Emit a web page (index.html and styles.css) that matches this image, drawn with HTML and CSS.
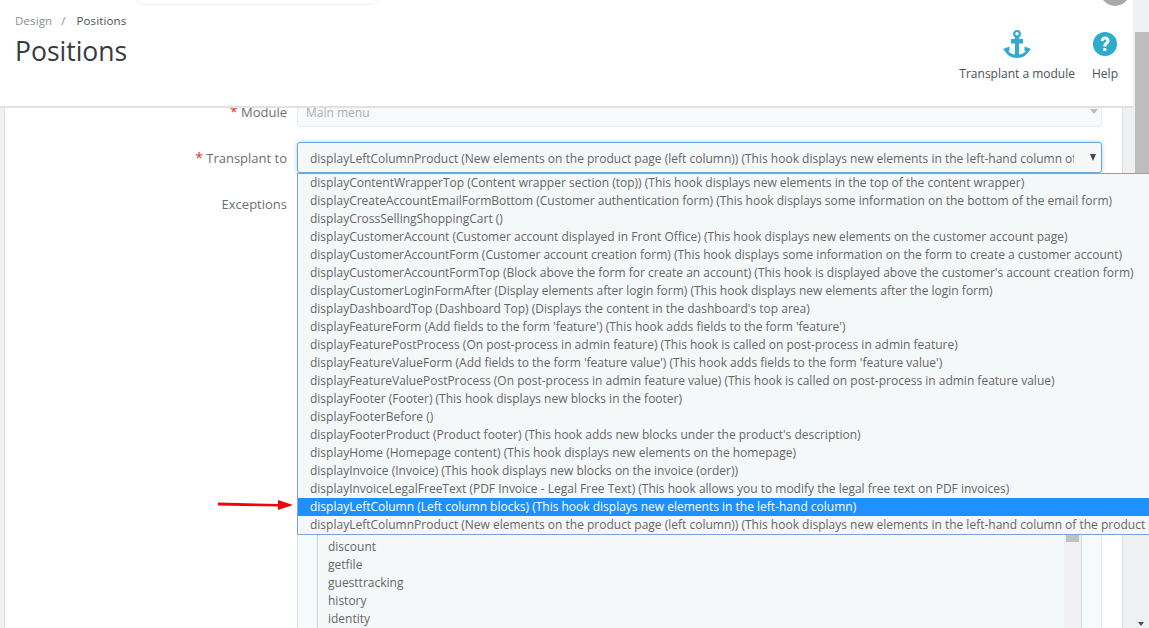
FILE: index.html
```html
<!DOCTYPE html>
<html lang="en">
<head>
<meta charset="utf-8">
<title>Positions</title>
<link rel="stylesheet" href="styles.css">
</head>
<body>
<div class="viewport">
  <div class="page">
    <header class="head">
      <div class="search-edge"></div>
      <div class="avatar"></div>
      <div class="head-left">
        <nav class="crumbs"><span class="crumb">Design</span><span class="sep">/</span><span class="crumb-cur">Positions</span></nav>
        <h1 class="title">Positions</h1>
      </div>
      <div class="toolbar">
        <a class="tool">
          <svg class="tool-icon" viewBox="0 0 30 30" width="30" height="30"><circle cx="15" cy="4.800" r="2.800" fill="none" stroke="#2eacce" stroke-width="2.200"/><rect x="13" y="8" width="4" height="19" fill="#2eacce"/><rect x="9" y="10" width="12" height="4.500" fill="#2eacce"/><path d="M1 20 L7.500 17.500 L7.500 22 L6 21.800 C8 24.500 11 25.800 15 26 C19 25.800 22 24.500 24 21.800 L22.500 22 L22.500 17.500 L29 20 L27.500 21.500 C25 26 21 29 15 29 C9 29 5 26 2.500 21.500 Z" fill="#2eacce"/></svg>
          <span class="tool-label">Transplant a module</span>
        </a>
        <a class="tool">
          <svg class="tool-icon" viewBox="0 0 30 30" width="30" height="30"><circle cx="15" cy="15" r="12" fill="#2eacce"/><path d="M10.800 12 c0 -6 8.700 -6 8.700 -.3 c0 3.500 -3.200 3 -3.200 5.800 h-3 c0 -4.300 3.100 -4 3.100 -5.800 c0 -1.800 -2.900 -1.800 -2.900 .5 z" fill="#fff"/><rect x="13.300" y="19" width="3" height="3" fill="#fff"/></svg>
          <span class="tool-label">Help</span>
        </a>
      </div>
    </header>
    <main class="content">
      <section class="panel">
        <div class="row row-module">
          <label class="label"><span class="req">*</span> Module</label>
          <div class="control select disabled">Main menu<span class="caret caret-muted"></span></div>
        </div>
        <div class="row row-transplant">
          <label class="label"><span class="req">*</span> Transplant to</label>
          <div class="control select focused"><span class="select-text">displayLeftColumnProduct (New elements on the product page (left column)) (This hook displays new elements in the left-hand column of the product page)</span><span class="caret"></span></div>
        </div>
        <div class="row row-exceptions">
          <label class="label">Exceptions</label>
          <div class="control exceptions">
            <div class="exc-list">
              <div class="exc-items">
                <div class="exc-item">discount</div>
                <div class="exc-item">getfile</div>
                <div class="exc-item">guesttracking</div>
                <div class="exc-item">history</div>
                <div class="exc-item">identity</div>
              </div>
              <div class="exc-scroll"><div class="exc-thumb"></div></div>
            </div>
          </div>
        </div>
      </section>
    </main>
  </div>
  <div class="scrollbar">
    <div class="sb-thumb"></div>
    <div class="sb-down"></div>
  </div>
  <ul class="dropdown">
    <li>displayContentWrapperTop (Content wrapper section (top)) (This hook displays new elements in the top of the content wrapper)</li>
    <li>displayCreateAccountEmailFormBottom (Customer authentication form) (This hook displays some information on the bottom of the email form)</li>
    <li>displayCrossSellingShoppingCart ()</li>
    <li>displayCustomerAccount (Customer account displayed in Front Office) (This hook displays new elements on the customer account page)</li>
    <li>displayCustomerAccountForm (Customer account creation form) (This hook displays some information on the form to create a customer account)</li>
    <li>displayCustomerAccountFormTop (Block above the form for create an account) (This hook is displayed above the customer's account creation form)</li>
    <li>displayCustomerLoginFormAfter (Display elements after login form) (This hook displays new elements after the login form)</li>
    <li>displayDashboardTop (Dashboard Top) (Displays the content in the dashboard's top area)</li>
    <li>displayFeatureForm (Add fields to the form 'feature') (This hook adds fields to the form 'feature')</li>
    <li>displayFeaturePostProcess (On post-process in admin feature) (This hook is called on post-process in admin feature)</li>
    <li>displayFeatureValueForm (Add fields to the form 'feature value') (This hook adds fields to the form 'feature value')</li>
    <li>displayFeatureValuePostProcess (On post-process in admin feature value) (This hook is called on post-process in admin feature value)</li>
    <li>displayFooter (Footer) (This hook displays new blocks in the footer)</li>
    <li>displayFooterBefore ()</li>
    <li>displayFooterProduct (Product footer) (This hook adds new blocks under the product's description)</li>
    <li>displayHome (Homepage content) (This hook displays new elements on the homepage)</li>
    <li>displayInvoice (Invoice) (This hook displays new blocks on the invoice (order))</li>
    <li>displayInvoiceLegalFreeText (PDF Invoice - Legal Free Text) (This hook allows you to modify the legal free text on PDF invoices)</li>
    <li class="selected">displayLeftColumn (Left column blocks) (This hook displays new elements in the left-hand column)</li>
    <li>displayLeftColumnProduct (New elements on the product page (left column)) (This hook displays new elements in the left-hand column of the product page)</li>
  </ul>
  <svg class="arrow" width="76" height="14" viewBox="0 0 76 14"><path d="M1 4.500 L61 6 L61 2 L76 7 L61 12 L61 8.500 L1 7.500 Z" fill="#f4000c"/></svg>
</div>
</body>
</html>
```
FILE: styles.css
```css
* { box-sizing: border-box; }
html, body { margin: 0; padding: 0; height: 100%; overflow: hidden; }
body { font-family: "Open Sans", "Noto Sans", sans-serif; font-size: 12px; color: #666; background: #eff0f1; }
.viewport { position: relative; display: flex; width: 1149px; height: 628px; overflow: hidden; }
.page { width: 1133px; height: 628px; display: flex; flex-direction: column; }
.head { position: relative; z-index: 2; height: 108px; flex: none; background: #fff; border-bottom: 2px solid #dfe2e3; display: flex; justify-content: space-between; padding: 0 13px 0 15px; }
.search-edge { position: absolute; left: 133px; top: -20px; width: 247px; height: 25px; border: 1px solid #eef0f1; border-radius: 12px; }
.avatar { position: absolute; left: 1100px; top: -24px; width: 30px; height: 30px; border-radius: 50%; background: #a9a9a9; }
.crumbs { margin-top: 12px; height: 18px; line-height: 18px; font-size: 11.500px; letter-spacing: .12px; display: flex; }
.crumb { color: #8a8f91; }
.sep { color: #8a8f91; margin: 0 11px 0 9px; }
.crumb-cur { color: #4a5256; }
.title { margin: 3px 0 0; font-size: 26.500px; line-height: 36px; font-weight: 400; color: #363a41; }
.toolbar { display: flex; gap: 15px; padding-top: 29px; }
.tool { display: flex; flex-direction: column; align-items: center; color: #4a5256; }
.tool-icon { display: block; }
.tool-label { margin-top: 6px; line-height: 18px; font-size: 12px; }
.content { flex: 1; min-height: 0; padding: 0 10px 0 4px; }
.panel { height: 100%; background: #fff; border-left: 1px solid #dfe2e3; border-right: 1px solid #dfe2e3; display: flex; flex-direction: column; }
.row { display: flex; gap: 10px; }
.label { width: 282px; flex: none; text-align: right; font-size: 13px; color: #6c6f71; line-height: 18px; }
.req { color: #e2342c; font-size: 14px; }
.control { width: 805px; flex: none; }
.select { position: relative; background: #f5f8f9; border: 1px solid #e4e8ea; border-radius: 3px; padding: 0 27px 0 12px; height: 31px; line-height: 31px; font-size: 12px; }
.select-text { display: block; white-space: nowrap; overflow: hidden; }
.disabled { color: #a9adaf; background: #f7f9fa; border-color: #e9ecee; height: 29px; line-height: 27px; padding-left: 8px; }
.focused { color: #666; border-color: #66a9e6; box-shadow: 0 0 4px rgba(102,175,233,.6); }
.row-module { margin-top: -10px; }
.row-module .label { padding-top: 5px; }
.row-transplant { margin-top: 15px; }
.row-transplant .label { padding-top: 7px; }
.row-exceptions { flex: 1; min-height: 0; }
.row-exceptions .label { padding-top: 22px; }
.caret { position: absolute; right: 5px; top: 11px; border-left: 3.500px solid transparent; border-right: 3.500px solid transparent; border-top: 7px solid #444; }
.caret-muted { border-left-width: 4.500px; border-right-width: 4.500px; border-top: 5px solid #b8bcbe; right: 3px; top: 10px; }
.exceptions { background: #f7fafc; border-left: 1px solid #dbe3ec; border-right: 1px solid #e4e8f0; padding: 0 19px; }
.exc-list { height: 100%; background: #f5f8f9; border-left: 1px solid #c8d3de; border-right: 1px solid #d5dadc; display: flex; }
.exc-items { flex: 1; padding: 365px 0 0 10px; }
.exc-item { height: 18px; line-height: 18px; font-size: 12px; }
.exc-scroll { width: 17px; padding: 0 2px; background: #f0f0f0; }
.exc-thumb { height: 369px; background: #c1c1c1; }
.scrollbar { position: relative; width: 16px; height: 628px; flex: none; background: #eff0f1; }
.sb-thumb { position: absolute; top: 32px; left: 2px; width: 14px; height: 470px; background: #bdbdbd; }
.sb-down { position: absolute; left: 5px; bottom: 2px; border-left: 3.500px solid transparent; border-right: 3.500px solid transparent; border-top: 4px solid #505050; }
.dropdown { position: absolute; z-index: 3; left: 297px; top: 173px; width: 860px; height: 362px; margin: 0; padding: 0; list-style: none; background: #f5f8f9; border: 1px solid #7da3d6; border-width: 1px 0 1px 1px; font-size: 12px; }
.dropdown li { height: 18px; line-height: 18px; padding-left: 12px; white-space: nowrap; color: #666; }
.dropdown .selected { background: #1e90ff; color: #fff; }
.arrow { position: absolute; left: 217px; top: 498px; }
```
